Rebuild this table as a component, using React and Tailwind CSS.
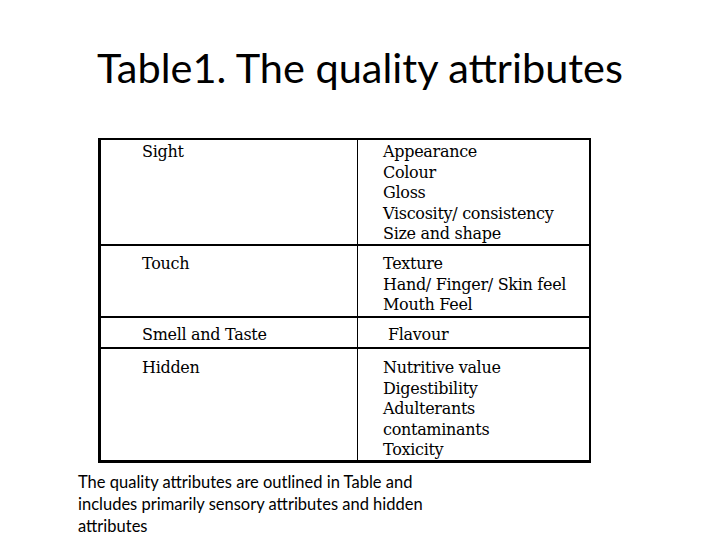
const sight = ["Appearance", "Colour", "Gloss", "Viscosity/ consistency", "Size and shape"];
const touch = ["Texture", "Hand/ Finger/ Skin feel", "Mouth Feel"];
const hidden = ["Nutritive value", "Digestibility", "Adulterants", "contaminants", "Toxicity"];

const Lines = ({ items }) => (
    <div className="flex flex-col" >
        {items.map((t) => (
            <span key={t} className="leading-[20.5px]" >{t}</span>
        ))}
    </div>
);

const App = () => {
    return (
        <div className="w-[720px] h-[540px] bg-white text-black overflow-hidden" >
            {/* title */}
            <h1 className="pt-[43px] h-[138px] text-center text-[41.5px] leading-[48px] font-['Lato',sans-serif]" >
                Table1. The quality attributes
            </h1>

            {/* table */}
            <div className="ml-[98px] w-[493px] border-t-2 border-r-2 border-b-[3px] border-l-[3px] border-black text-[16px] tracking-[-0.3px] font-['DejaVu_Serif',serif]" >
                <div className="grid grid-cols-[257px_1fr] h-[106px] border-b-2 border-black" >
                    <div className="pl-[41px] pt-[2px] border-r border-black leading-[20.5px]" >Sight</div>
                    <div className="pl-[25px] pt-[2px]" ><Lines items={sight} /></div>
                </div>
                <div className="grid grid-cols-[257px_1fr] h-[72px] border-b-2 border-black" >
                    <div className="pl-[41px] pt-[8px] border-r border-black leading-[20.5px]" >Touch</div>
                    <div className="pl-[25px] pt-[8px]" ><Lines items={touch} /></div>
                </div>
                <div className="grid grid-cols-[257px_1fr] h-[31px] border-b-2 border-black" >
                    <div className="pl-[41px] pt-[7px] border-r border-black leading-[20.5px]" >Smell and Taste</div>
                    <div className="pl-[30px] pt-[7px] leading-[20.5px]" >Flavour</div>
                </div>
                <div className="grid grid-cols-[257px_1fr] h-[111px]" >
                    <div className="pl-[41px] pt-[9px] border-r border-black leading-[20.5px]" >Hidden</div>
                    <div className="pl-[25px] pt-[9px]" ><Lines items={hidden} /></div>
                </div>
            </div>

            {/* caption */}
            <p className="ml-[78px] mt-[8px] w-[370px] text-[16.5px] leading-[22px] font-['Lato',sans-serif]" >
                The quality attributes are outlined in Table and includes primarily sensory attributes and hidden attributes
            </p>
        </div>
    );
};

export default App;
